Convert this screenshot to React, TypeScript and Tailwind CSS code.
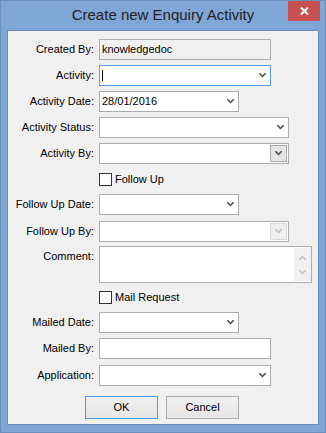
import React from "react";

function Chevron({ color = "#555555" }: { color?: string }) {
  return (
    <svg width="7" height="5" viewBox="0 0 7 5" className="block">
      <path d="M0 0 L1.2 0 L3.5 2.3 L5.8 0 L7 0 L7 1 L3.5 4.5 L0 1 Z" fill={color} />
    </svg>
  );
}

function ChevronUp({ color = "#c2c2c2" }: { color?: string }) {
  return (
    <svg width="7" height="5" viewBox="0 0 7 5" className="block">
      <path d="M0 5 L1.2 5 L3.5 2.7 L5.8 5 L7 5 L7 4 L3.5 0.5 L0 4 Z" fill={color} />
    </svg>
  );
}

function Row({
  label,
  mt,
  children,
  top = false,
}: {
  label: string;
  mt: string;
  children: React.ReactNode;
  top?: boolean;
}) {
  return (
    <div className={`flex ${mt}`}>
      <div
        className={
          top
            ? "w-[86px] text-right pt-[4px] leading-[13px]"
            : "w-[86px] text-right flex items-center justify-end"
        }
      >
        {label}
      </div>
      <div className="ml-[5px]">{children}</div>
    </div>
  );
}

function Combo({ w, children }: { w: string; children?: React.ReactNode }) {
  return (
    <div className={`${w} h-[21px] border border-[#abadb3] bg-white flex items-center justify-between pl-[2px] pr-[4px]`}>
      <div className="flex items-center">{children}</div>
      <Chevron />
    </div>
  );
}

export default function App() {
  return (
    <div className="w-[326px] h-[433px] bg-[#80a6d6] border border-[#6b8ebd] flex flex-col text-[11px] text-black font-[Liberation_Sans,Arial,sans-serif]">
      <div className="relative h-[29px] shrink-0">
        <div className="pt-[5px] text-center text-[15px] leading-[17px] text-[#222222]">
          Create new Enquiry Activity
        </div>
        <div className="absolute top-0 right-[5px] w-[32px] h-[20px] bg-[#c75050] flex items-center justify-center">
          <svg width="9" height="8" viewBox="0 0 9 8">
            <path d="M1 0.5 L8 7.5 M8 0.5 L1 7.5" stroke="#ffffff" strokeWidth="2" />
          </svg>
        </div>
      </div>

      <div className="mx-[6px] mb-[7px] flex-1 border border-[#6a8cba] bg-[#f0f0f0] flex flex-col">
        <Row label="Created By:" mt="mt-[8px]">
          <div className="w-[172px] h-[21px] border border-[#abadb3] bg-[#f0f0f0] flex items-center pl-[2px]">
            knowledgedoc
          </div>
        </Row>

        <Row label="Activity:" mt="mt-[5px]">
          <div className="w-[172px] h-[21px] border border-[#569de5] bg-white flex items-center justify-between pl-[2px] pr-[4px]">
            <div className="w-px h-[11px] bg-black" />
            <Chevron />
          </div>
        </Row>

        <Row label="Activity Date:" mt="mt-[5px]">
          <Combo w="w-[140px]">28/01/2016</Combo>
        </Row>

        <Row label="Activity Status:" mt="mt-[5px]">
          <Combo w="w-[190px]" />
        </Row>

        <Row label="Activity By:" mt="mt-[5px]">
          <div className="w-[190px] h-[21px] border border-[#abadb3] bg-white flex items-center justify-end pr-[1px]">
            <div className="w-[17px] h-[17px] border border-[#acacac] bg-[#e5e5e5] flex items-center justify-center">
              <Chevron color="#555555" />
            </div>
          </div>
        </Row>

        <div className="flex items-center mt-[9px] ml-[91px] h-[13px]">
          <div className="w-[13px] h-[13px] border border-[#333333] bg-white" />
          <span className="ml-[3px] leading-[13px]">Follow Up</span>
        </div>

        <Row label="Follow Up Date:" mt="mt-[8px]">
          <Combo w="w-[140px]" />
        </Row>

        <Row label="Follow Up By:" mt="mt-[6px]">
          <div className="w-[190px] h-[21px] border border-[#abadb3] bg-white flex items-center justify-end pr-[1px]">
            <div className="w-[17px] h-[17px] border border-[#dadada] bg-[#efefef] flex items-center justify-center">
              <Chevron color="#c2c2c2" />
            </div>
          </div>
        </Row>

        <Row label="Comment:" mt="mt-[4px]" top>
          <div className="w-[213px] h-[37px] border border-[#abadb3] bg-white flex justify-end py-[1px]">
            <div className="w-[17px] h-full bg-[#f0f0f0] flex flex-col items-center pt-[7px]">
              <ChevronUp />
              <div className="mt-[10px]">
                <Chevron color="#c2c2c2" />
              </div>
            </div>
          </div>
        </Row>

        <div className="flex items-center mt-[8px] ml-[91px] h-[13px]">
          <div className="w-[13px] h-[13px] border border-[#333333] bg-white" />
          <span className="ml-[3px] leading-[13px]">Mail Request</span>
        </div>

        <Row label="Mailed Date:" mt="mt-[8px]">
          <Combo w="w-[140px]" />
        </Row>

        <Row label="Mailed By:" mt="mt-[5px]">
          <div className="w-[172px] h-[21px] border border-[#abadb3] bg-white" />
        </Row>

        <Row label="Application:" mt="mt-[6px]">
          <Combo w="w-[172px]" />
        </Row>

        <div className="mt-[4px] ml-[151px] w-[93px] h-px bg-[#f8f8f8]" />

        <div className="flex mt-[5px] ml-[77px] gap-[8px]">
          <div className="w-[73px] h-[23px] border border-[#4a9aea] bg-linear-to-b from-[#f0f0f0] to-[#e5e5e5] flex items-center justify-center">
            OK
          </div>
          <div className="w-[73px] h-[23px] border border-[#acacac] bg-linear-to-b from-[#f0f0f0] to-[#e5e5e5] flex items-center justify-center">
            Cancel
          </div>
        </div>
      </div>
    </div>
  );
}
